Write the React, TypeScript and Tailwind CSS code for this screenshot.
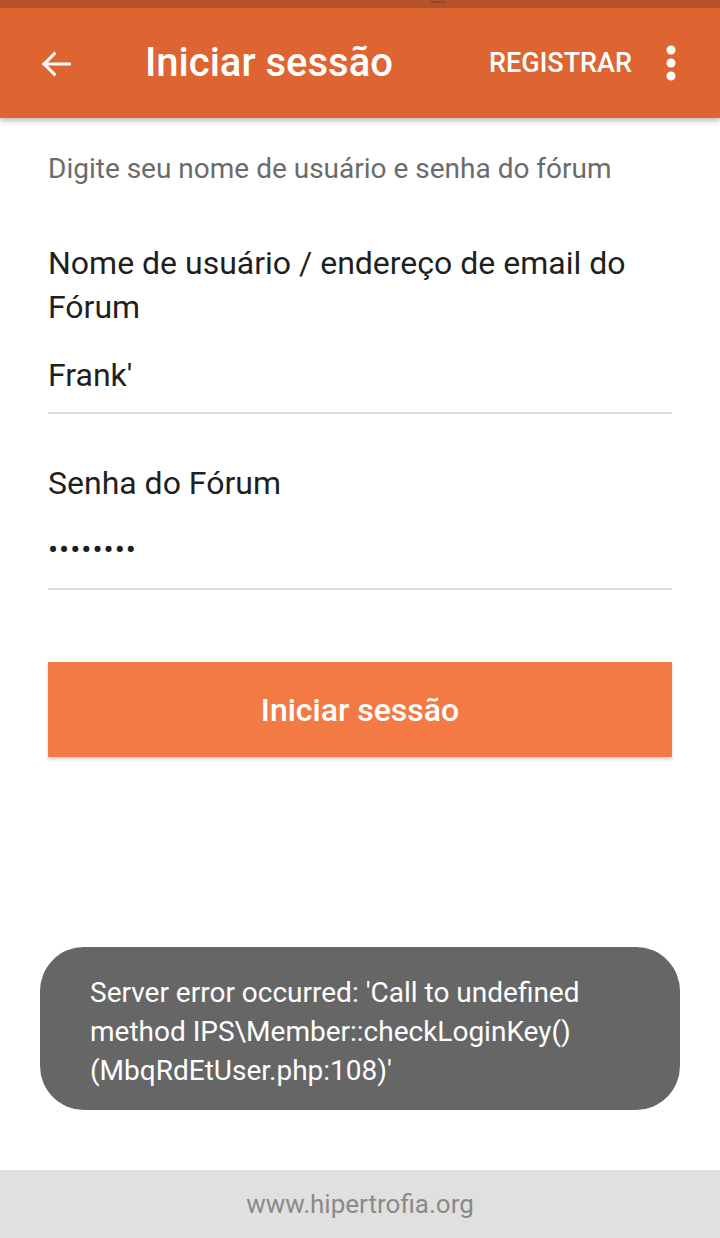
import React from 'react';

const font = { fontFamily: 'Roboto, "Noto Sans", sans-serif' };

function BackArrow() {
  return (
    <svg width="38" height="38" viewBox="0 0 24 24" fill="none" stroke="white" strokeWidth="1.9" strokeLinecap="square">
      <path d="M20.5 12H4.5" />
      <path d="M11 5.5L4.5 12l6.5 6.5" />
    </svg>
  );
}

function MoreDots() {
  return (
    <svg width="12" height="36" viewBox="0 0 12 36" fill="white">
      <circle cx="6" cy="5" r="4.5" />
      <circle cx="6" cy="18" r="4.5" />
      <circle cx="6" cy="31" r="4.5" />
    </svg>
  );
}

export default function App() {
  return (
    <div className="relative flex h-[1238px] w-[720px] flex-col overflow-hidden bg-white" style={font}>
      <div className="relative h-[8px] bg-[#b5522a]">
        <div className="absolute left-[430px] top-[1px] h-[2px] w-[16px] bg-[#8f4a2e]" />
      </div>

      <header className="relative z-10 flex h-[110px] items-center bg-[#de6431] shadow-[0_3px_5px_rgba(0,0,0,0.25)]">
        <div className="ml-[37px] mt-[2px] flex h-[38px] w-[38px] items-center justify-center">
          <BackArrow />
        </div>
        <h1 className="ml-[70px] text-[40px] font-medium leading-none text-white">Iniciar sessão</h1>
        <span className="ml-auto text-[27px] font-medium leading-none text-white">REGISTRAR</span>
        <div className="ml-[33px] mr-[43px] flex items-center">
          <MoreDots />
        </div>
      </header>

      <main className="flex flex-col px-[48px]">
        <p className="mt-[33px] text-[28px] leading-[36px] text-[#6b6b6b]">Digite seu nome de usuário e senha do fórum</p>

        <label className="mt-[54px] text-[32px] leading-[44px] text-[#1f1f1f]">
          Nome de usuário / endereço de email do Fórum
        </label>
        <div className="mt-[26px] text-[32px] leading-[40px] text-[#1f1f1f]">Frank'</div>
        <div className="mt-[17px] h-[2px] bg-[#dcdcdc]" />

        <label className="mt-[47px] text-[32px] leading-[44px] text-[#1f1f1f]">Senha do Fórum</label>
        <div className="mt-[25px] text-[30px] leading-[40px] tracking-[1px] text-[#1f1f1f]">••••••••</div>
        <div className="mt-[18px] h-[2px] bg-[#dcdcdc]" />

        <button className="mt-[72px] flex h-[95px] items-center justify-center bg-[#f47a45] text-[32px] font-medium text-white shadow-[0_2px_3px_rgba(0,0,0,0.2)]">
          Iniciar sessão
        </button>
      </main>

      <div className="absolute left-[40px] top-[947px] flex h-[163px] w-[640px] items-center rounded-[44px] bg-[#666666] px-[50px] pt-[5px]">
        <p className="text-[28px] leading-[39px] text-white">
          Server error occurred: 'Call to undefined method IPS\Member::checkLoginKey() (MbqRdEtUser.php:108)'
        </p>
      </div>

      <footer className="mt-auto flex h-[68px] items-center justify-center bg-[#e0e0e0]">
        <span className="text-[26px] text-[#8a8a8a]">www.hipertrofia.org</span>
      </footer>
    </div>
  );
}
